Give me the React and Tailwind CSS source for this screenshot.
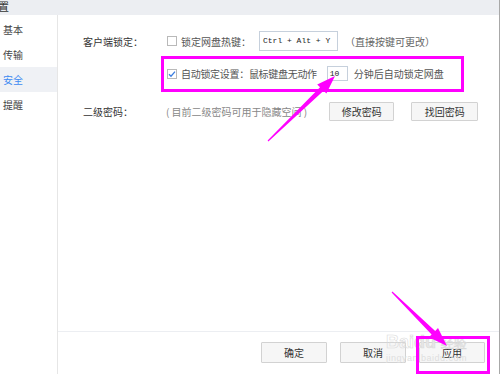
import React from "react";

const Checkbox = ({ checked }) => (
  <span className="w-[10px] h-[10px] border border-[#b9b9b9] bg-white flex items-center justify-center shrink-0">
    {checked && (
      <svg width="8" height="8" viewBox="0 0 8 8">
        <path d="M1 4.2 L3 6.2 L7 1.6" fill="none" stroke="#3b7de0" strokeWidth="1.3" />
      </svg>
    )}
  </span>
);

const Btn = ({ children, w }) => (
  <button className={`${w} h-full bg-[#f6f6f6] border border-[#d2d2d2] rounded-[1px] text-[10px] text-[#333] flex items-center justify-center`}>
    {children}
  </button>
);

const App = () => {
  const navItems = ["基本", "传输", "安全", "提醒"];

  return (
    <div className="relative w-[500px] h-[374px] overflow-hidden bg-white border-r border-[#a8a8a8] flex flex-col font-['Noto_Sans_CJK_SC',sans-serif] text-[#333]">
      {/* title bar, cut at the top */}
      <div className="h-[15px] bg-[#eceef2] shrink-0 flex items-end">
        <span className="text-[11px] -ml-[13px] mb-[3px] leading-none text-[#333]">设置</span>
      </div>

      <div className="flex flex-1">
        {/* sidebar */}
        <div className="w-[58px] border-r border-[#e6e6e6] pt-[2px] text-[10px]">
          {navItems.map((item) => (
            <div
              key={item}
              className={`h-[25px] pl-[3px] flex items-center ${
                item === "安全" ? "bg-[#eff1f5] text-[#3d8bf2]" : "text-[#444]"
              }`}
            >
              {item}
            </div>
          ))}
        </div>

        {/* main */}
        <div className="flex-1 flex flex-col">
          <div className="flex-1 pl-[25px] pt-[16px] text-[10px]">
            {/* row 1 */}
            <div className="flex items-center h-[20px]">
              <span className="w-[84px]">客户端锁定：</span>
              <Checkbox />
              <span className="ml-[4px] text-[#555]">锁定网盘热键：</span>
              <div className="ml-[8px] w-[79px] h-[20px] border border-[#c6d0dc] flex items-center pl-[3px] font-['Liberation_Mono',monospace] text-[8px] text-[#222]">
                Ctrl + Alt + Y
              </div>
              <span className="ml-[7px] text-[#666]">（直接按键可更改）</span>
            </div>

            {/* row 2 */}
            <div className="mt-[5px] h-[35px] flex items-center">
              <span className="w-[84px]"></span>
              <Checkbox checked />
              <span className="ml-[4px] text-[#555] tracking-[-0.3px]">自动锁定设置：鼠标键盘无动作</span>
              <div className="ml-[10px] w-[21px] h-[15px] border border-[#c6d0dc] flex items-center pl-[2px] font-['Liberation_Mono',monospace] text-[8px] text-[#222]">
                10
              </div>
              <span className="ml-[6px] text-[#555]">分钟后自动锁定网盘</span>
            </div>

            {/* row 3 */}
            <div className="mt-[11px] h-[19px] flex items-center">
              <span className="w-[83px]">二级密码：</span>
              <span className="text-[#888]">( 目前二级密码可用于隐藏空间 )</span>
              <div className="ml-[22px] h-full flex gap-[17px]">
                <Btn w="w-[65px]">修改密码</Btn>
                <Btn w="w-[67px]">找回密码</Btn>
              </div>
            </div>
          </div>

          {/* footer */}
          <div className="h-[43px] border-t border-[#eceef2] flex justify-end items-start pt-[10px] pr-[14px]">
            <div className="h-[21px] flex gap-[13px]">
              <Btn w="w-[66px]">确定</Btn>
              <Btn w="w-[66px]">取消</Btn>
              <Btn w="w-[66px]">应用</Btn>
            </div>
          </div>
        </div>
      </div>

      {/* watermark */}
      <div className="absolute left-[386px] top-[333px] pointer-events-none leading-none">
        <div className="text-[18px] font-['Liberation_Sans',sans-serif] font-bold text-transparent [-webkit-text-stroke:0.6px_#dadada]">
          Bai<span className="text-[#e6e6e6]">du</span> <span className="text-[13px] font-normal">经验</span>
        </div>
        <div className="text-[9px] font-['Liberation_Sans',sans-serif] text-[#dedede] mt-[3px] tracking-[0.5px]">jingyan.baidu.com</div>
      </div>

      {/* annotations */}
      <div className="absolute left-[161px] top-[56px] w-[303px] h-[36px] border-[3px] border-[#f0f] pointer-events-none" />
      <div className="absolute left-[416px] top-[336px] w-[74px] h-[38px] border-[3px] border-[#f0f] pointer-events-none" />
      <svg className="absolute left-0 top-0 pointer-events-none" width="500" height="374">
        <polygon
          fill="#f0f"
          points="268.4,141.4 323.6,90.8 326.4,93.6 335,76 317.2,84.4 320,87.2 267.6,140.6"
        />
        <polygon
          fill="#f0f"
          points="392.4,291.6 435.2,330.9 438,328.1 447,346 428.8,337.3 431.6,334.5 391.6,292.4"
        />
      </svg>
    </div>
  );
};

export default App;
